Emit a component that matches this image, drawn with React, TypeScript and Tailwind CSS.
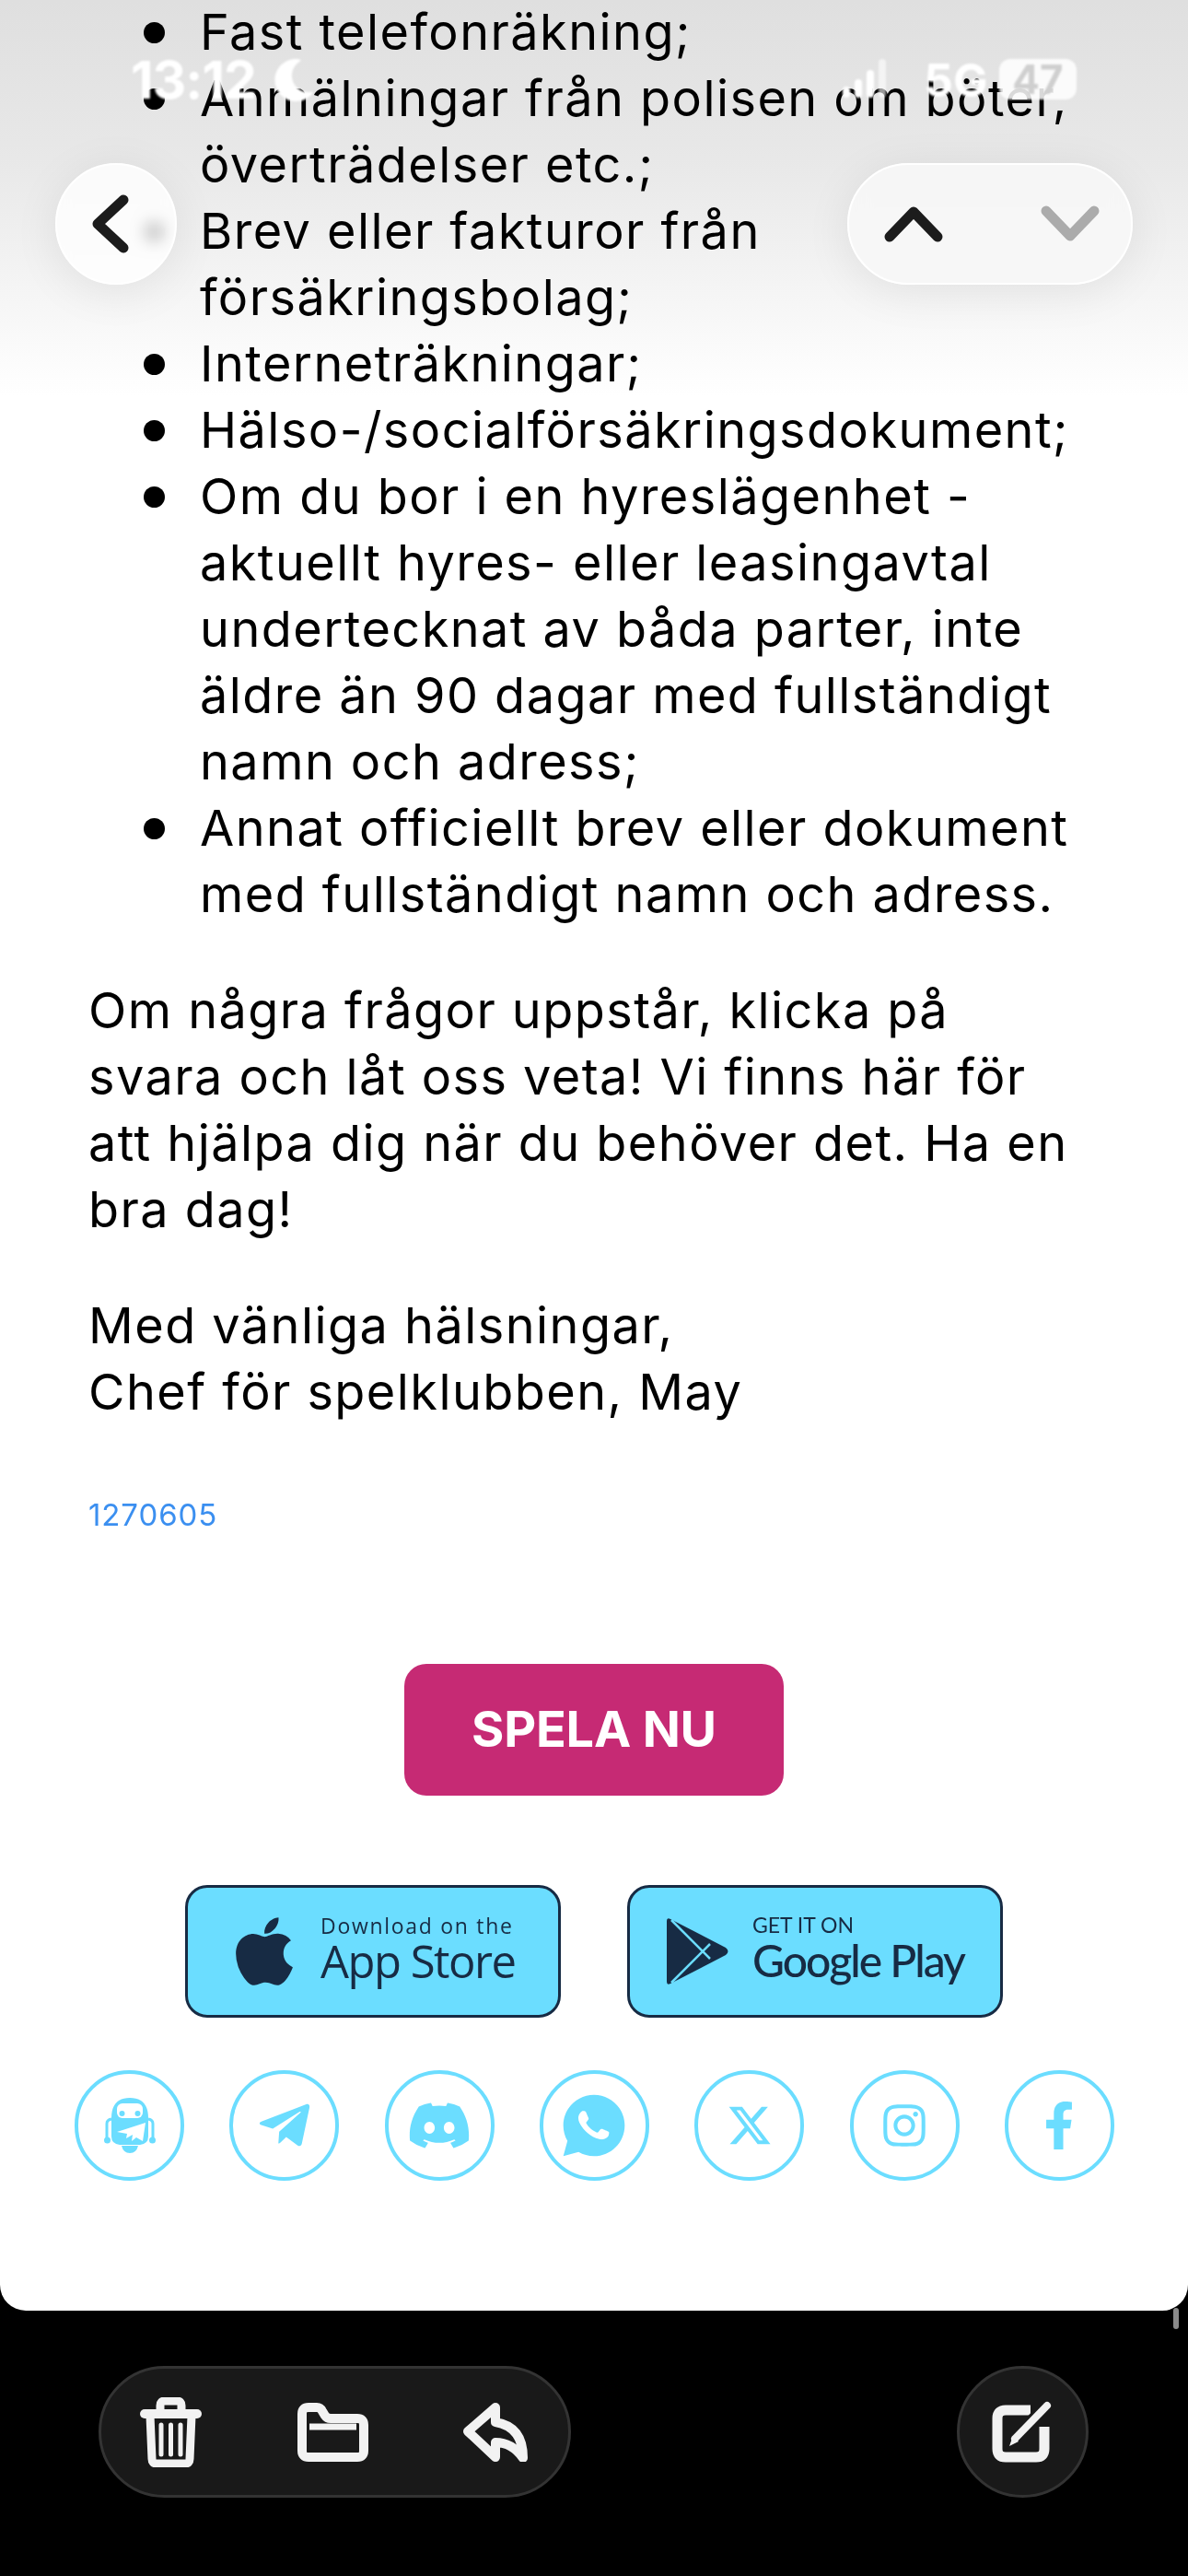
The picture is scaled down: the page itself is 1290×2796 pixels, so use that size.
import { FaApple, FaDiscord, FaFacebookF, FaInstagram, FaMoon, FaTelegramPlane } from "react-icons/fa";
import { FaXTwitter } from "react-icons/fa6";
import { RiWhatsappFill } from "react-icons/ri";

const bullets = [
  ["Fast telefonräkning;"],
  ["Anmälningar från polisen om böter,", "överträdelser etc.;"],
  ["Brev eller fakturor från", "försäkringsbolag;"],
  ["Interneträkningar;"],
  ["Hälso-/socialförsäkringsdokument;"],
  [
    "Om du bor i en hyreslägenhet -",
    "aktuellt hyres- eller leasingavtal",
    "undertecknat av båda parter, inte",
    "äldre än 90 dagar med fullständigt",
    "namn och adress;",
  ],
  ["Annat officiellt brev eller dokument", "med fullständigt namn och adress."],
];

function RobotIcon() {
  return (
    <svg width="56" height="61" viewBox="0 0 56 61">
      <path d="M3 44V28q0-4 5-5M53 44V28q0-4-5-5" fill="none" stroke="#6bddff" strokeWidth="3" />
      <circle cx="3.5" cy="46" r="3.5" fill="#6bddff" />
      <circle cx="52.5" cy="46" r="3.5" fill="#6bddff" />
      <path d="M8 22C8 7 15 0 28 0s20 7 20 22v20q0 8-9 9H17q-9-1-9-9Z" fill="#6bddff" />
      <rect x="14" y="6" width="28" height="16" rx="6" fill="#fff" />
      <circle cx="19.5" cy="17" r="3" fill="#6bddff" />
      <circle cx="36.5" cy="17" r="3" fill="#6bddff" />
      <path d="M14 37 45 27 42 47 35 43 30 47 31 40 24 44 25 39Z" fill="#fff" />
      <path d="M19 52h18q-2 8-9 8t-9-8Z" fill="#6bddff" />
    </svg>
  );
}

function PlayIcon() {
  return (
    <svg width="67" height="72" viewBox="0 0 67 72">
      <path d="M0 3Q0-1 4 1L64 32Q69 36 64 40L4 71Q0 73 0 69Z" fill="#172b44" />
      <path d="M5 2 47 44M5 70 47 28" stroke="#6bddff" strokeWidth="2.5" />
    </svg>
  );
}

function TrashIcon() {
  return (
    <svg width="67" height="76" viewBox="0 0 67 76" fill="none" stroke="#f2f2f2">
      <path d="M22 16V9q0-5 5-5h13q5 0 5 5v7" strokeWidth="9" />
      <path d="M5 18h57" strokeWidth="10" strokeLinecap="round" />
      <path d="M11 20l2 47q0 5 5 5h31q5 0 5-5l2-47" strokeWidth="9" />
      <path d="M23 30v32M33.500 30v32M44 30v32" strokeWidth="5" strokeLinecap="round" />
    </svg>
  );
}

function FolderIcon() {
  return (
    <svg width="77" height="64" viewBox="0 0 77 64" fill="none" stroke="#f2f2f2">
      <path d="M5 12q0-7 7-7h9q4 0 6 4l3 5q2 3 6 3h29q7 0 7 7v28q0 7-7 7H12q-7 0-7-7Z" fill="#191919" strokeWidth="10" />
      <path d="M13 26h51" strokeWidth="7" />
    </svg>
  );
}

function ReplyIcon() {
  return (
    <svg width="72" height="64" viewBox="0 0 72 64" fill="none" stroke="#f2f2f2">
      <path d="M36 5 6 31l30 28V43q18 0 30 17 0-34-30-39Z" strokeWidth="10" strokeLinejoin="round" />
    </svg>
  );
}

function ComposeIcon() {
  return (
    <svg width="68" height="67" viewBox="0 0 68 67" fill="none">
      <path d="M42 10H15q-9 0-9 9v33q0 9 9 9h33q9 0 9-9V28" stroke="#f2f2f2" strokeWidth="11" />
      <path d="M25 41 60 5" stroke="#191919" strokeWidth="14" />
      <path d="M25 41 60 5" stroke="#f2f2f2" strokeWidth="8" strokeLinecap="round" />
      <path d="M23 38 19 49l10-5Z" fill="#f2f2f2" />
    </svg>
  );
}

function Social({ children }: { children: React.ReactNode }) {
  return (
    <div className="flex h-[120px] w-[119px] items-center justify-center rounded-full border-[4px] border-[#6bddff] text-[#6bddff]">
      {children}
    </div>
  );
}

export default function App() {
  return (
    <div className="relative h-[2796px] w-[1290px] overflow-hidden bg-black font-['Inter',sans-serif]">
      {/* Mail body */}
      <div className="h-[2508px] overflow-hidden rounded-b-[28px] bg-white text-black">
        <div className="-mt-[1px] text-[54px] leading-[72px] tracking-[1.45px]">
          <ul className="pl-[156px]">
            {bullets.map((lines, i) => (
              <li key={i} className="flex">
                <div className="mr-[38px] mt-[25px] h-[23px] w-[23px] shrink-0 rounded-full bg-black" />
                <div>
                  {lines.map((l, j) => (
                    <div key={j} className="whitespace-nowrap">
                      {l}
                    </div>
                  ))}
                </div>
              </li>
            ))}
          </ul>
          <p className="mt-[54px] whitespace-nowrap pl-[96px]">
            Om några frågor uppstår, klicka på
            <br />
            svara och låt oss veta! Vi finns här för
            <br />
            att hjälpa dig när du behöver det. Ha en
            <br />
            bra dag!
          </p>
          <p className="mt-[54px] whitespace-nowrap pl-[96px]">
            Med vänliga hälsningar,
            <br />
            Chef för spelklubben, May
          </p>
        </div>
        <div className="mt-[77px] pl-[96px] text-[33px] leading-[40px] tracking-[0.9px] text-[#3b8ff0]">1270605</div>

        <div className="mt-[142px] flex justify-center">
          <div className="flex h-[143px] w-[412px] items-center justify-center rounded-[24px] bg-[#c62a74] pb-[2px] text-[54px] font-bold tracking-[-0.2px] text-white">
            SPELA NU
          </div>
        </div>

        <div className="mt-[97px] flex justify-center gap-[72px]">
          <div className="flex h-[144px] w-[408px] items-center gap-[19px] rounded-[24px] border-[3px] border-[#172b44] bg-[#6bddff] pl-[41px] text-[#172b44]">
            <FaApple size={84} />
            <div className="pb-[6px] font-['Open_Sans',sans-serif]">
              <div className="text-[23px] leading-[26px] tracking-[1.7px]">Download on the</div>
              <div className="text-[49px] leading-[50px] tracking-[-1.5px]">App Store</div>
            </div>
          </div>
          <div className="flex h-[144px] w-[408px] items-center gap-[26px] rounded-[24px] border-[3px] border-[#172b44] bg-[#6bddff] pl-[40px] text-[#172b44]">
            <PlayIcon />
            <div className="pb-[6px] font-['Lato',sans-serif]">
              <div className="text-[23px] leading-[26px]">GET IT ON</div>
              <div className="text-[48px] font-medium leading-[52px] tracking-[-2px]">Google Play</div>
            </div>
          </div>
        </div>

        <div className="mt-[57px] flex justify-between pl-[81px] pr-[80px]">
          <Social>
            <RobotIcon />
          </Social>
          <Social>
            <FaTelegramPlane size={62} />
          </Social>
          <Social>
            <FaDiscord size={70} />
          </Social>
          <Social>
            <RiWhatsappFill size={80} />
          </Social>
          <Social>
            <FaXTwitter size={50} />
          </Social>
          <Social>
            <FaInstagram size={52} />
          </Social>
          <Social>
            <FaFacebookF size={52} />
          </Social>
        </div>
      </div>

      {/* Scroll indicator */}
      <div className="absolute left-[1274px] top-[2505px] h-[23px] w-[6px] rounded-full bg-[#8a8a8a]" />

      {/* Toolbar */}
      <div className="mt-[60px] flex justify-between pl-[107px] pr-[108px]">
        <div className="flex h-[143px] w-[513px] items-center rounded-full border-[3px] border-[#333] bg-[#191919] pl-[42px]">
          <TrashIcon />
          <div className="ml-[104px]">
            <FolderIcon />
          </div>
          <div className="ml-[102px]">
            <ReplyIcon />
          </div>
        </div>
        <div className="flex h-[143px] w-[143px] items-center justify-center rounded-full border-[3px] border-[#333] bg-[#191919]">
          <ComposeIcon />
        </div>
      </div>

      {/* Top fade over the scrolled content */}
      <div className="pointer-events-none absolute inset-x-0 top-0 h-[430px] bg-linear-to-b from-[#dfdfdf] via-[#e8e8e8] via-40% to-white mix-blend-multiply" />

      {/* Status bar */}
      <div className="absolute left-[142px] top-[58px] text-[57px] font-bold leading-[58px] tracking-[-1px] text-white blur-[1px]">
        13:12
      </div>
      <div className="absolute left-[296px] top-[64px] text-white blur-[1px]">
        <FaMoon size={46} />
      </div>
      <div className="absolute left-[915px] top-[64px] flex items-end gap-[5px] blur-[1px]">
        <div className="h-[12px] w-[8px] rounded-sm bg-white" />
        <div className="h-[20px] w-[8px] rounded-sm bg-white" />
        <div className="h-[30px] w-[8px] rounded-sm bg-white" />
        <div className="h-[42px] w-[8px] rounded-sm bg-white/60" />
      </div>
      <div className="absolute left-[1003px] top-[62px] text-[50px] font-bold leading-[50px] text-white blur-[1px]">
        5G
      </div>
      <div className="absolute left-[1085px] top-[64px] flex h-[44px] w-[84px] items-center justify-center rounded-[12px] bg-white/85 text-[44px] font-bold leading-[44px] text-[#cfcfcf] blur-[1px]">
        47
      </div>

      {/* Back button */}
      <div className="absolute left-[60px] top-[177px] flex h-[132px] w-[132px] items-center rounded-full border-[2px] border-white bg-white/80 pl-[36px] shadow-[0_8px_50px_rgba(0,0,0,0.08)] backdrop-blur-sm">
        <svg width="44" height="64" viewBox="0 0 44 64" fill="none">
          <path d="M36 6 8 32l28 26" stroke="#1c1c1c" strokeWidth="11" strokeLinecap="round" strokeLinejoin="round" />
        </svg>
      </div>

      {/* Prev / next */}
      <div className="absolute left-[920px] top-[177px] flex h-[132px] w-[310px] items-center gap-[106px] rounded-full border-[2px] border-white bg-[#f7f7f7]/90 pl-[38px] shadow-[0_8px_50px_rgba(0,0,0,0.08)] backdrop-blur-md">
        <svg width="64" height="40" viewBox="0 0 64 40" fill="none">
          <path d="M6 34 32 7l26 27" stroke="#1c1c1c" strokeWidth="11" strokeLinecap="round" strokeLinejoin="round" />
        </svg>
        <svg width="64" height="40" viewBox="0 0 64 40" fill="none">
          <path d="M6 6l26 27L58 6" stroke="#ababab" strokeWidth="11" strokeLinecap="round" strokeLinejoin="round" />
        </svg>
      </div>
    </div>
  );
}
